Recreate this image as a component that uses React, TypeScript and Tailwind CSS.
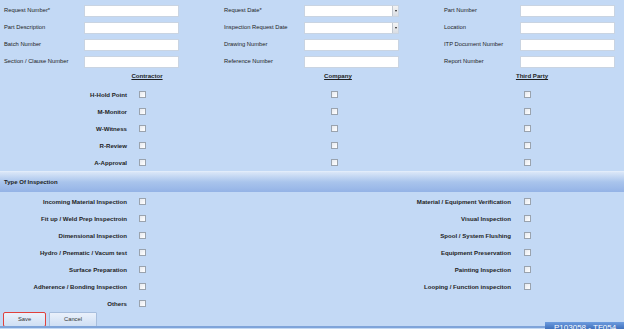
import React from "react";

const Box = () => (
  <div className="w-[7px] h-[7px] border border-[#9aa3ae] bg-gradient-to-br from-[#e6e9ee] to-[#ffffff] shrink-0" />
);

const TextInput = ({ dropdown }: { dropdown?: boolean }) => (
  <div className="h-[12px] w-[95px] bg-white border border-[#c9d4e2] flex justify-end">
    {dropdown && (
      <div className="w-[6px] h-full bg-gradient-to-b from-[#f4f4f4] to-[#d9dde3] border-l border-[#c0c7d0] flex items-center justify-center">
        <div className="w-0 h-0 border-l-[1.5px] border-r-[1.5px] border-t-[2px] border-l-transparent border-r-transparent border-t-[#222]" />
      </div>
    )}
  </div>
);

const topRows: [string, string, boolean, string][] = [
  ["Request Number*", "Request Date*", true, "Part Number"],
  ["Part Description", "Inspection Request Date", true, "Location"],
  ["Batch Number", "Drawing Number", false, "ITP Document Number"],
  ["Section / Clause Number", "Reference Number", false, "Report Number"],
];

const levels = ["H-Hold Point", "M-Monitor", "W-Witness", "R-Review", "A-Approval"];

const inspections: [string, string][] = [
  ["Incoming Material Inspection", "Material / Equipment Verification"],
  ["Fit up / Weld Prep Inspectroin", "Visual Inspection"],
  ["Dimensional Inspection", "Spool / System Flushing"],
  ["Hydro / Pnematic / Vacum test", "Equipment Preservation"],
  ["Surface Preparation", "Painting Inspection"],
  ["Adherence / Bonding Inspection", "Looping / Function inspeciton"],
  ["Others", ""],
];

export default function App() {
  return (
    <div
      className="relative w-[624px] h-[329px] overflow-hidden bg-[#c3d9f5] flex flex-col text-[#1e1e1e]"
      style={{ fontFamily: "'Liberation Sans', Arial, sans-serif" }}
    >
      {/* top form */}
      <div className="pt-[2px] pl-[4px] grid grid-cols-[80px_95px_45px_80px_95px_45px_76px_95px]">
        {topRows.map(([a, b, dd, c]) => (
          <React.Fragment key={a}>
            <div className="h-[17px] flex items-center text-[5.8px]">{a}</div>
            <div className="h-[17px] flex items-center"><TextInput /></div>
            <div />
            <div className="h-[17px] flex items-center text-[5.8px]">{b}</div>
            <div className="h-[17px] flex items-center"><TextInput dropdown={dd} /></div>
            <div />
            <div className="h-[17px] flex items-center text-[5.8px]">{c}</div>
            <div className="h-[17px] flex items-center"><TextInput /></div>
          </React.Fragment>
        ))}
      </div>

      {/* column headers */}
      <div className="h-[12px] flex items-center text-[6.1px] font-bold underline">
        <div className="ml-[117px] w-[60px] text-center">Contractor</div>
        <div className="ml-[131px] w-[60px] text-center">Company</div>
        <div className="ml-[134px] w-[60px] text-center">Third Party</div>
      </div>

      {/* level rows */}
      <div className="mt-[4px] flex flex-col">
        {levels.map((l) => (
          <div key={l} className="h-[17px] flex items-center">
            <div className="w-[127px] text-right text-[6.1px] font-bold">{l}</div>
            <div className="ml-[12px]"><Box /></div>
            <div className="ml-[185px]"><Box /></div>
            <div className="ml-[186px]"><Box /></div>
          </div>
        ))}
      </div>

      {/* section band */}
      <div className="h-[21px] border-t border-[#e2ecfa] bg-gradient-to-b from-[#dbe7f8] via-[#a9c4ec] to-[#94b3e6] flex items-center pl-[4px] text-[6px] font-bold">
        Type Of Inspection
      </div>

      {/* inspections */}
      <div className="mt-[1px] flex flex-col">
        {inspections.map(([a, b]) => (
          <div key={a} className="h-[17px] flex items-center">
            <div className="w-[127px] text-right text-[6.1px] font-bold">{a}</div>
            <div className="ml-[12px]"><Box /></div>
            {b && (
              <>
                <div className="w-[365px] text-right text-[6.1px] font-bold">{b}</div>
                <div className="ml-[13px]"><Box /></div>
              </>
            )}
          </div>
        ))}
      </div>

      {/* buttons */}
      <div className="h-[14px] flex items-start pl-[3px] gap-[3px] text-[5.8px] text-[#333]">
        <button className="w-[43px] h-[15px] rounded-[2px] border border-[#e0403c] bg-gradient-to-b from-[#eaf1fb] to-[#cfdff4] flex items-center justify-center">
          Save
        </button>
        <button className="w-[48px] h-[15px] rounded-[1px] border border-[#a7bedd] bg-gradient-to-b from-[#eaf1fb] to-[#cfdff4] flex items-center justify-center">
          Cancel
        </button>
      </div>
      <div className="h-[2px] bg-[#7fa4d9]" />

      {/* bottom right tab */}
      <div className="absolute right-0 bottom-0 w-[79px] h-[7px] bg-gradient-to-b from-[#6e9ddf] to-[#3f70bd] overflow-hidden">
        <div className="pl-[9px] pt-[1px] text-[8px] leading-[9px] text-white whitespace-nowrap">P103058 - TF054</div>
      </div>
    </div>
  );
}
